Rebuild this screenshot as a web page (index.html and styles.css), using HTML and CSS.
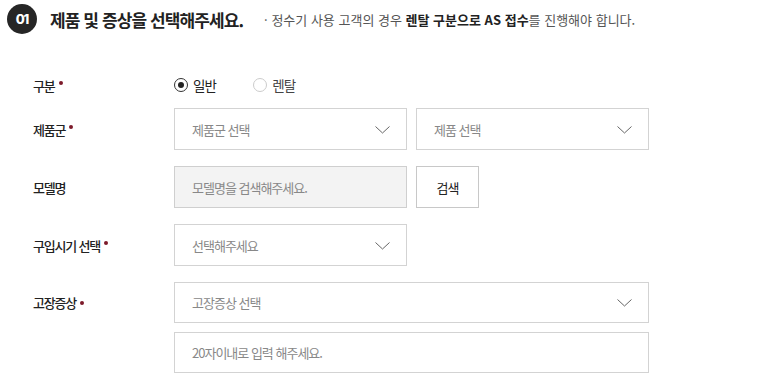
FILE: index.html
```html
<!DOCTYPE html>
<html lang="ko">
<head>
<meta charset="utf-8">
<link rel="stylesheet" href="styles.css">
</head>
<body>
<div class="page">
  <div class="head">
    <span class="num">01</span>
    <h2 class="title">제품 및 증상을 선택해주세요.</h2>
    <p class="note">· 정수기 사용 고객의 경우 <b>렌탈 구분으로 AS 접수</b>를 진행해야 합니다.</p>
  </div>

  <div class="form">
    <div class="row row-radio">
      <div class="label">구분<i class="req"></i></div>
      <div class="field radios">
        <label class="radio on"><span class="dot"></span>일반</label>
        <label class="radio"><span class="dot"></span>렌탈</label>
      </div>
    </div>

    <div class="row">
      <div class="label">제품군<i class="req"></i></div>
      <div class="field split">
        <div class="box select"><span>제품군 선택</span><svg class="chev" width="15" height="8" viewBox="0 0 15 8"><path d="M0.5 0.5 L7.5 7 L14.5 0.5" fill="none" stroke="#666" stroke-width="1"/></svg></div>
        <div class="box select"><span>제품 선택</span><svg class="chev" width="15" height="8" viewBox="0 0 15 8"><path d="M0.5 0.5 L7.5 7 L14.5 0.5" fill="none" stroke="#666" stroke-width="1"/></svg></div>
      </div>
    </div>

    <div class="row">
      <div class="label">모델명</div>
      <div class="field model">
        <div class="box readonly"><span>모델명을 검색해주세요.</span></div>
        <button class="btn">검색</button>
      </div>
    </div>

    <div class="row">
      <div class="label">구입시기 선택<i class="req"></i></div>
      <div class="field split">
        <div class="box select"><span>선택해주세요</span><svg class="chev" width="15" height="8" viewBox="0 0 15 8"><path d="M0.5 0.5 L7.5 7 L14.5 0.5" fill="none" stroke="#666" stroke-width="1"/></svg></div>
      </div>
    </div>

    <div class="row row-top">
      <div class="label">고장증상<i class="req"></i></div>
      <div class="field stack">
        <div class="box select wide"><span>고장증상 선택</span><svg class="chev" width="15" height="8" viewBox="0 0 15 8"><path d="M0.5 0.5 L7.5 7 L14.5 0.5" fill="none" stroke="#666" stroke-width="1"/></svg></div>
        <div class="box wide"><span>20자이내로 입력 해주세요.</span></div>
      </div>
    </div>
  </div>
</div>
</body>
</html>
```

FILE: styles.css
```css
* { box-sizing: border-box; }
html, body { margin: 0; padding: 0; background: #fff; }
body {
  font-family: "Noto Sans CJK KR", "Noto Sans", sans-serif;
  color: #222;
  width: 774px;
  height: 391px;
  overflow: hidden;
}
.page { padding: 4px 0 0 7px; }

.head {
  display: flex;
  align-items: center;
  height: 30px;
}
.num {
  width: 30px;
  height: 30px;
  border-radius: 50%;
  background: #262626;
  color: #fff;
  font-family: "Inter", "Noto Sans", sans-serif;
  font-weight: 800;
  font-size: 13px;
  letter-spacing: -1px;
  display: flex;
  align-items: center;
  justify-content: center;
  flex: none;
}
.title {
  margin: 0 0 0 13px;
  font-size: 17px;
  font-weight: 700;
  letter-spacing: -0.9px;
  color: #222;
  line-height: 1;
}
.note {
  margin: 0 0 0 21px;
  font-size: 13px;
  color: #555;
  letter-spacing: 0;
  line-height: 1;
}
.note b { color: #222; font-weight: 700; }

.form {
  display: flex;
  flex-direction: column;
  gap: 16px;
  margin-top: 38px;
  padding-left: 26px;
}
.row {
  display: flex;
  align-items: center;
}
.row-top { align-items: flex-start; }
.row-top .label { height: 41px; display: flex; align-items: center; }
.row-radio { margin-bottom: -6px; }
.label {
  width: 141px;
  flex: none;
  font-size: 13px;
  font-weight: 500;
  letter-spacing: -1.2px;
  color: #222;
}
.req {
  display: inline-block;
  width: 4px;
  height: 4px;
  border-radius: 50%;
  background: #7d1a2a;
  margin-left: 4px;
  vertical-align: 6px;
}
.field { display: flex; }
.radios { gap: 0; height: 26px; align-items: center; }
.radio {
  display: flex;
  align-items: center;
  font-size: 13.5px;
  letter-spacing: -0.8px;
  color: #222;
  margin-right: 37px;
}
.radio .dot {
  width: 14px;
  height: 14px;
  border-radius: 50%;
  border: 1px solid #ccc;
  margin-right: 5px;
  display: flex;
  align-items: center;
  justify-content: center;
}
.radio.on .dot { border-color: #333; }
.radio.on .dot::after {
  content: "";
  width: 6px;
  height: 6px;
  border-radius: 50%;
  background: #222;
}
.radio:not(.on) { color: #444; }

.split { gap: 9px; }
.box {
  width: 233px;
  height: 42px;
  border: 1px solid #d3d3d3;
  display: flex;
  align-items: center;
  justify-content: space-between;
  padding: 0 16px 0 17px;
  font-size: 13px;
  letter-spacing: -1px;
  color: #888;
  background: #fff;
}
.box .chev { flex: none; margin-top: 1px; }
.readonly { background: #f3f3f3; border-color: #cfcfcf; }
.model { gap: 9px; }
.btn {
  width: 63px;
  height: 42px;
  border: 1px solid #c8c8c8;
  background: #fff;
  font-family: inherit;
  font-size: 13px;
  letter-spacing: -1px;
  color: #222;
  padding: 0;
}
.stack { flex-direction: column; gap: 9px; }
.wide { width: 475px; height: 41px; }
```
